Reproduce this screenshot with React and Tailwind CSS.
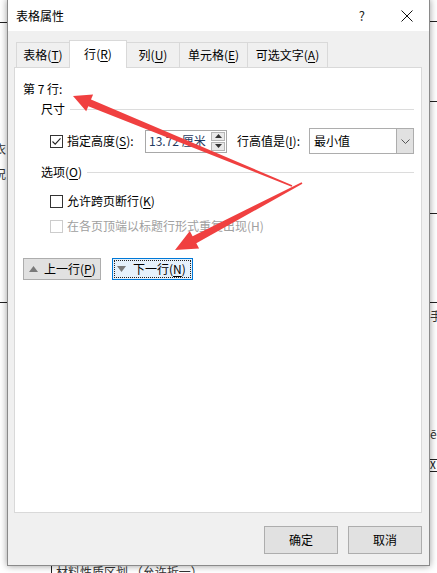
import React from 'react';

const FONT = { fontFamily: '"Noto Sans CJK SC", "Noto Sans", sans-serif' };

function arrowPoints(tx, ty, px, py, headLen, headHalf, shaftHalf, tailHalf) {
    const len = Math.hypot(px - tx, py - ty);
    const dx = (px - tx) / len;
    const dy = (py - ty) / len;
    const nx = -dy;
    const ny = dx;
    const bx = px - dx * headLen;
    const by = py - dy * headLen;
    const pts = [
        [tx + nx * tailHalf, ty + ny * tailHalf],
        [bx + nx * shaftHalf, by + ny * shaftHalf],
        [bx + nx * headHalf, by + ny * headHalf],
        [px, py],
        [bx - nx * headHalf, by - ny * headHalf],
        [bx - nx * shaftHalf, by - ny * shaftHalf],
        [tx - nx * tailHalf, ty - ny * tailHalf],
    ];
    return pts.map((p) => p[0].toFixed(1) + ',' + p[1].toFixed(1)).join(' ');
}

function Checkbox({ checked, disabled }) {
    return (
        <div className={`w-[13px] h-[13px] border bg-white flex items-center justify-center shrink-0 ${disabled ? 'border-[#cccccc]' : 'border-[#333333]'}`}>
            {checked && (
                <svg width="11" height="11" viewBox="0 0 11 11">
                    <path d="M1.5 5.5 L4.2 8.2 L9.5 2.3" fill="none" stroke="#222" strokeWidth="1.1" />
                </svg>
            )}
        </div>
    );
}

function Tab({ label, mn, rest, active, w, first }) {
    return (
        <div
            className={`${w} ${first ? '' : '-ml-px'} flex items-center justify-center border-t border-l border-r border-[#d9d9d9] text-[12px] ${active ? 'h-[28px] bg-white relative z-10 -mb-px pb-[2px]' : 'h-[25px] bg-[#f0f0f0]'}`}
        >
            <span>{label}(<span className="underline underline-offset-2">{mn}</span>){rest}</span>
        </div>
    );
}

export default function App() {
    return (
        <div className="relative w-[437px] h-[573px] overflow-hidden bg-white text-black" style={FONT}>
            {/* document behind the dialog */}
            <div className="absolute left-0 top-[22px] w-[8px] h-px bg-[#222]"></div>
            <div className="absolute left-0 top-[302px] w-[8px] h-px bg-[#222]"></div>
            <div className="absolute left-0 top-[143px] text-[12px] leading-none text-[#333] -translate-x-[6px]">衣</div>
            <div className="absolute left-0 top-[168px] text-[12px] leading-none text-[#333] -translate-x-[6px]">况</div>
            <div className="absolute left-[430px] top-[21px] w-[8px] h-px bg-[#222]"></div>
            <div className="absolute left-[430px] top-[101px] w-[8px] h-px bg-[#222]"></div>
            <div className="absolute left-[430px] top-[213px] w-[8px] h-px bg-[#222]"></div>
            <div className="absolute left-[430px] top-[302px] w-[8px] h-px bg-[#222]"></div>
            <div className="absolute left-[430px] top-[310px] text-[12px] leading-none text-[#333]">手</div>
            <div className="absolute left-[430px] top-[428px] text-[12px] leading-none text-[#333]">ē</div>
            <div className="absolute left-[429px] top-[459px] w-[9px] h-[13px] border border-[#222] text-[10px] leading-none">X</div>
            <div className="absolute left-[51px] top-[560px] w-px h-[13px] bg-[#222]"></div>
            <div className="absolute left-[56px] top-[566px] text-[12px] leading-none text-[#333] whitespace-nowrap">材料性质区划 （允许折一）</div>

            {/* dialog window */}
            <div className="absolute left-[7px] top-[-1px] w-[423px] h-[567px] border border-[#8a8a8a] bg-[#f0f0f0] shadow-[0_0_7px_rgba(0,0,0,0.4)] flex flex-col">
                <div className="h-[31px] bg-white flex items-center pl-[8px] pr-[16px] text-[12px]">
                    <span className="flex-1">表格属性</span>
                    <span className="text-[13px] mr-[36px] text-[#222]">?</span>
                    <svg width="12" height="12" viewBox="0 0 12 12">
                        <path d="M0.5 0.5 L11.5 11.5 M11.5 0.5 L0.5 11.5" stroke="#111" strokeWidth="1" />
                    </svg>
                </div>

                <div className="flex-1 flex flex-col pt-[9px] pl-[6px] pr-[7px]">
                    <div className="flex items-end h-[27px] pl-[2px]">
                        <Tab label="表格" mn="T" w="w-[54px]" first />
                        <Tab label="行" mn="R" w="w-[58px]" active />
                        <Tab label="列" mn="U" w="w-[54px]" />
                        <Tab label="单元格" mn="E" w="w-[69px]" />
                        <Tab label="可选文字" mn="A" w="w-[81px]" />
                    </div>

                    <div className="h-[446px] bg-white border border-[#d9d9d9] flex flex-col pl-[8px] pr-[7px] text-[12px]">
                        <div className="mt-[12px] h-[18px] flex items-center">第 7 行:</div>

                        <div className="mt-[2px] h-[18px] flex items-center pl-[18px]">
                            <span>尺寸</span>
                            <div className="flex-1 h-px bg-[#dcdcdc] ml-[5px]"></div>
                        </div>

                        <div className="mt-[10px] h-[26px] flex items-center pl-[27px]">
                            <Checkbox checked />
                            <span className="ml-[4px] w-[78px]">指定高度(<span className="underline underline-offset-2">S</span>):</span>
                            <div className="w-[82px] h-[23px] border border-[#a8a8a8] bg-white flex items-center">
                                <span className="flex-1 pl-[3px] text-[12px] text-[#1f3a60]">13.72 厘米</span>
                                <div className="w-[15px] h-full flex flex-col justify-center gap-[1px] pr-[1px]">
                                    <div className="h-[9px] bg-[#e9e9e9] border border-[#b5b5b5] flex items-center justify-center">
                                        <svg width="7" height="4" viewBox="0 0 7 4"><path d="M0 4 L3.5 0 L7 4 Z" fill="#333" /></svg>
                                    </div>
                                    <div className="h-[9px] bg-[#e9e9e9] border border-[#b5b5b5] flex items-center justify-center">
                                        <svg width="7" height="4" viewBox="0 0 7 4"><path d="M0 0 L3.5 4 L7 0 Z" fill="#333" /></svg>
                                    </div>
                                </div>
                            </div>
                            <span className="ml-[10px] w-[72px]">行高值是(<span className="underline underline-offset-2">I</span>):</span>
                            <div className="w-[105px] h-[26px] border border-[#adadad] bg-white flex">
                                <span className="flex-1 flex items-center pl-[4px]">最小值</span>
                                <div className="w-[17px] bg-[#e1e1e1] border-l border-[#adadad] flex items-center justify-center">
                                    <svg width="9" height="5" viewBox="0 0 9 5"><path d="M0.5 0.5 L4.5 4.5 L8.5 0.5" fill="none" stroke="#555" strokeWidth="1" /></svg>
                                </div>
                            </div>
                        </div>

                        <div className="mt-[9px] h-[18px] flex items-center pl-[18px]">
                            <span>选项(<span className="underline underline-offset-2">O</span>)</span>
                            <div className="flex-1 h-px bg-[#dcdcdc] ml-[5px]"></div>
                        </div>

                        <div className="mt-[11px] h-[18px] flex items-center pl-[27px]">
                            <Checkbox />
                            <span className="ml-[4px]">允许跨页断行(<span className="underline underline-offset-2">K</span>)</span>
                        </div>

                        <div className="mt-[7px] h-[18px] flex items-center pl-[27px] text-[#a0a0a0]">
                            <Checkbox disabled />
                            <span className="ml-[4px]">在各页顶端以标题行形式重复出现(H)</span>
                        </div>

                        <div className="mt-[23px] h-[22px] flex items-stretch">
                            <div className="w-[78px] bg-[#e1e1e1] border border-[#adadad] flex items-center pl-[5px]">
                                <svg width="9" height="6" viewBox="0 0 9 6"><path d="M0 6 L4.5 0 L9 6 Z" fill="#7a7a7a" /></svg>
                                <span className="ml-[6px]">上一行(<span className="underline underline-offset-2">P</span>)</span>
                            </div>
                            <div className="ml-[11px] w-[81px] bg-[#e5f1fb] border border-[#0078d7] p-[1px] flex">
                                <div className="flex-1 border border-dotted border-[#222] flex items-center pl-[2px]">
                                    <svg width="9" height="6" viewBox="0 0 9 6"><path d="M0 0 L4.5 6 L9 0 Z" fill="#7a7a7a" /></svg>
                                    <span className="ml-[7px]">下一行(<span className="underline underline-offset-2">N</span>)</span>
                                </div>
                            </div>
                        </div>
                    </div>

                    <div className="mt-[13px] flex justify-end gap-[10px] text-[12px]">
                        <div className="w-[74px] h-[28px] bg-[#e1e1e1] border border-[#adadad] flex items-center justify-center">确定</div>
                        <div className="w-[74px] h-[28px] bg-[#e1e1e1] border border-[#adadad] flex items-center justify-center">取消</div>
                    </div>
                </div>
            </div>

            {/* red annotation arrows */}
            <svg className="absolute left-0 top-0 pointer-events-none" width="437" height="573">
                <polygon points={arrowPoints(292, 186, 73, 96, 18, 9, 3.6, 0.8)} fill="#f04040" />
                <polygon points={arrowPoints(302, 183, 175, 250, 22, 10, 4, 0.8)} fill="#f04040" />
            </svg>
        </div>
    );
}
